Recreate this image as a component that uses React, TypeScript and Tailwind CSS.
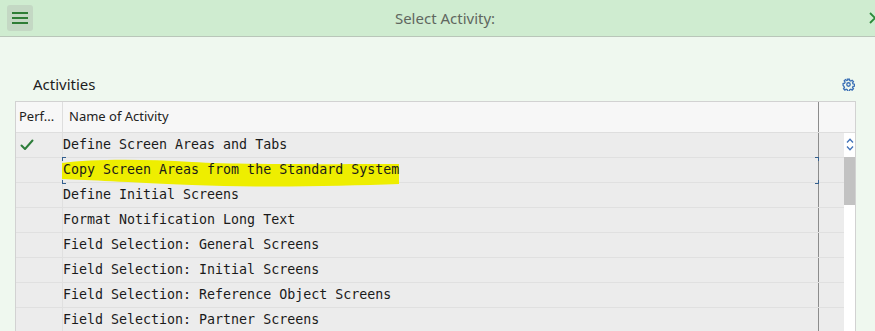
const ACTIVITIES = [
  { name: "Define Screen Areas and Tabs", done: true },
  { name: "Copy Screen Areas from the Standard System", focused: true },
  { name: "Define Initial Screens" },
  { name: "Format Notification Long Text" },
  { name: "Field Selection: General Screens" },
  { name: "Field Selection: Initial Screens" },
  { name: "Field Selection: Reference Object Screens" },
  { name: "Field Selection: Partner Screens" },
];

function Check() {
  return (
    <svg width="14" height="12" viewBox="0 0 14 12" fill="none">
      <path d="M1.5 6.5 L5 10 L12.5 1.5" stroke="#2d7d3a" strokeWidth="2" strokeLinecap="round" strokeLinejoin="round" />
    </svg>
  );
}

function Gear() {
  return (
    <svg width="13" height="13" viewBox="0 0 24 24" fill="none" stroke="#3a6fb5" strokeWidth="2.4">
      <path d="M10.3 2h3.4l.6 2.8 2 .9 2.4-1.6 2.4 2.4-1.6 2.4.9 2 2.8.6v3.4l-2.8.6-.9 2 1.6 2.4-2.4 2.4-2.4-1.6-2 .9-.6 2.8h-3.4l-.6-2.8-2-.9-2.4 1.6-2.4-2.4 1.6-2.4-.9-2L2 13.7v-3.4l2.8-.6.9-2-1.6-2.4 2.4-2.4 2.4 1.6 2-.9z" />
      <circle cx="12" cy="12" r="3.2" />
    </svg>
  );
}

export default function App() {
  return (
    <div className="w-[875px] h-[331px] overflow-hidden bg-[#eff8ef] font-['Noto_Sans',sans-serif]">
      {/* dialog header */}
      <div className="h-[37px] flex items-center pl-[7px] bg-[#cfecd0] border-b border-[#b9c6b9]">
        <button className="w-[26px] h-[26px] shrink-0 rounded-[3px] bg-[#c4d8c4] flex flex-col items-center justify-center gap-[3px]">
          <span className="block w-[16px] h-[2px] bg-[#2f7d36]" />
          <span className="block w-[16px] h-[2px] bg-[#2f7d36]" />
          <span className="block w-[16px] h-[2px] bg-[#2f7d36]" />
        </button>
        <div className="w-[824px] shrink-0 text-center text-[15px] text-[#5f675f]">Select Activity:</div>
        <svg className="shrink-0 ml-[12px]" width="12" height="12" viewBox="0 0 12 12" fill="none">
          <path d="M1 1 L11 11 M11 1 L1 11" stroke="#2a8a3a" strokeWidth="1.8" />
        </svg>
      </div>

      {/* section title */}
      <div className="mt-[35px] h-[24px] flex items-center justify-between pl-[33px] pr-[20px]">
        <span className="text-[15px] text-[#1d1d1d]">Activities</span>
        <Gear />
      </div>

      {/* table */}
      <div className="mt-[5px] ml-[15px] w-[841px] border border-[#d2d2d2] bg-[#ececec]">
        <div className="h-[31px] flex bg-[#f7f7f7] border-b border-[#dedede] text-[13px] text-[#222]">
          <div className="w-[47px] shrink-0 pl-[3px] flex items-center border-r border-[#dedede]">Perf...</div>
          <div className="w-[756px] shrink-0 pl-[6px] flex items-center border-r border-[#8c8c8c]">Name of Activity</div>
          <div className="flex-1" />
        </div>
        <div className="flex">
          <div className="w-[828px] shrink-0">
            {ACTIVITIES.map((a) => (
              <div key={a.name} className="h-[25px] flex border-b border-[#e0e0e0]">
                <div className="w-[47px] shrink-0 pl-[4px] flex items-center border-r border-[#e0e0e0]">
                  {a.done && <Check />}
                </div>
                <div className="relative w-[756px] shrink-0 flex items-center border-r border-[#8c8c8c] font-['DejaVu_Sans_Mono',monospace] text-[13.3px] text-[#1a1a1a]">
                  {a.focused && (
                    <>
                      <svg className="absolute left-[-1px] top-0 z-10 overflow-visible" width="337" height="30" viewBox="0 0 337 30">
                        <path d="M0 5 C 30 1, 80 1, 130 4 S 280 6, 337 6 L 337 26 C 280 28, 200 30, 130 27 S 30 22, 0 21 Z" fill="#eeee00" />
                      </svg>
                      <span className="absolute left-[-1px] top-[-1px] w-[4px] h-[4px] border-l border-t border-[#34608f] z-30" />
                      <span className="absolute left-[-1px] bottom-[-2px] w-[4px] h-[4px] border-l border-b border-[#34608f] z-30" />
                      <span className="absolute right-[-1px] top-[-1px] w-[4px] h-[4px] border-r border-t border-[#34608f] z-30" />
                      <span className="absolute right-[-1px] bottom-[-2px] w-[4px] h-[4px] border-r border-b border-[#34608f] z-30" />
                    </>
                  )}
                  <span className="relative z-20 whitespace-pre">{a.name}</span>
                </div>
                <div className="flex-1" />
              </div>
            ))}
          </div>
          <div className="w-[11px] shrink-0 bg-white flex flex-col">
            <div className="h-[22px] flex flex-col items-center justify-center gap-[3px]">
              <svg width="8" height="5" viewBox="0 0 8 5" fill="none">
                <path d="M1 4.5 L4 1.2 L7 4.5" stroke="#4072b8" strokeWidth="1.3" />
              </svg>
              <svg width="8" height="5" viewBox="0 0 8 5" fill="none">
                <path d="M1 0.5 L4 3.8 L7 0.5" stroke="#4072b8" strokeWidth="1.3" />
              </svg>
            </div>
            <div className="mt-[2px] h-[48px] bg-[#c2c2c2]" />
          </div>
        </div>
      </div>
    </div>
  );
}
